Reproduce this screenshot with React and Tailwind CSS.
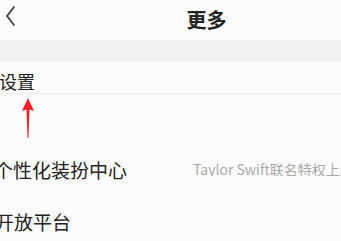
export default function App() {
  return (
    <div
      className="w-[341px] h-[241px] overflow-hidden bg-[#fbfbfb] text-[#222]"
      style={{ fontFamily: '"Noto Sans CJK SC", "Noto Sans", sans-serif' }}
    >
      {/* Header */}
      <div className="relative h-[40px] flex items-center justify-center">
        <svg className="absolute left-[4px] top-[5px]" width="12" height="22" viewBox="0 0 12 22" fill="none">
          <path d="M10 2 L3 11 L10 20" stroke="#333" strokeWidth="1.6" strokeLinecap="round" strokeLinejoin="round" />
        </svg>
        <span className="ml-[72px] text-[20px] font-bold leading-none">更多</span>
      </div>

      {/* Section gap */}
      <div className="h-[22px] bg-[#f2f2f2]" />

      {/* 设置 */}
      <div className="h-[32px] pt-[6px] flex items-center border-b border-[#ededed]">
        <span className="-ml-[1px] text-[18px] leading-none">设置</span>
      </div>

      {/* Red arrow annotation */}
      <div className="h-[46px] relative">
        <svg className="absolute left-[21px] top-[4px]" width="14" height="40" viewBox="0 0 14 40">
          <path d="M7 0 L13 13 L8.5 11.5 L7.5 40 L6.5 40 L5.5 11.5 L1 13 Z" fill="#f0202c" />
        </svg>
      </div>

      {/* 个性化装扮中心 */}
      <div className="h-[58px] flex items-center justify-between">
        <span className="-ml-[6px] text-[19px] leading-none whitespace-nowrap">个性化装扮中心</span>
        <span className="text-[14px] text-[#a9a9a9] whitespace-nowrap w-[148px] overflow-hidden leading-none">
          Taylor Swift联名特权上线
        </span>
      </div>

      {/* 开放平台 */}
      <div className="h-[46px] flex items-center">
        <span className="-ml-[5px] text-[19px] leading-none">开放平台</span>
      </div>
    </div>
  )
}
